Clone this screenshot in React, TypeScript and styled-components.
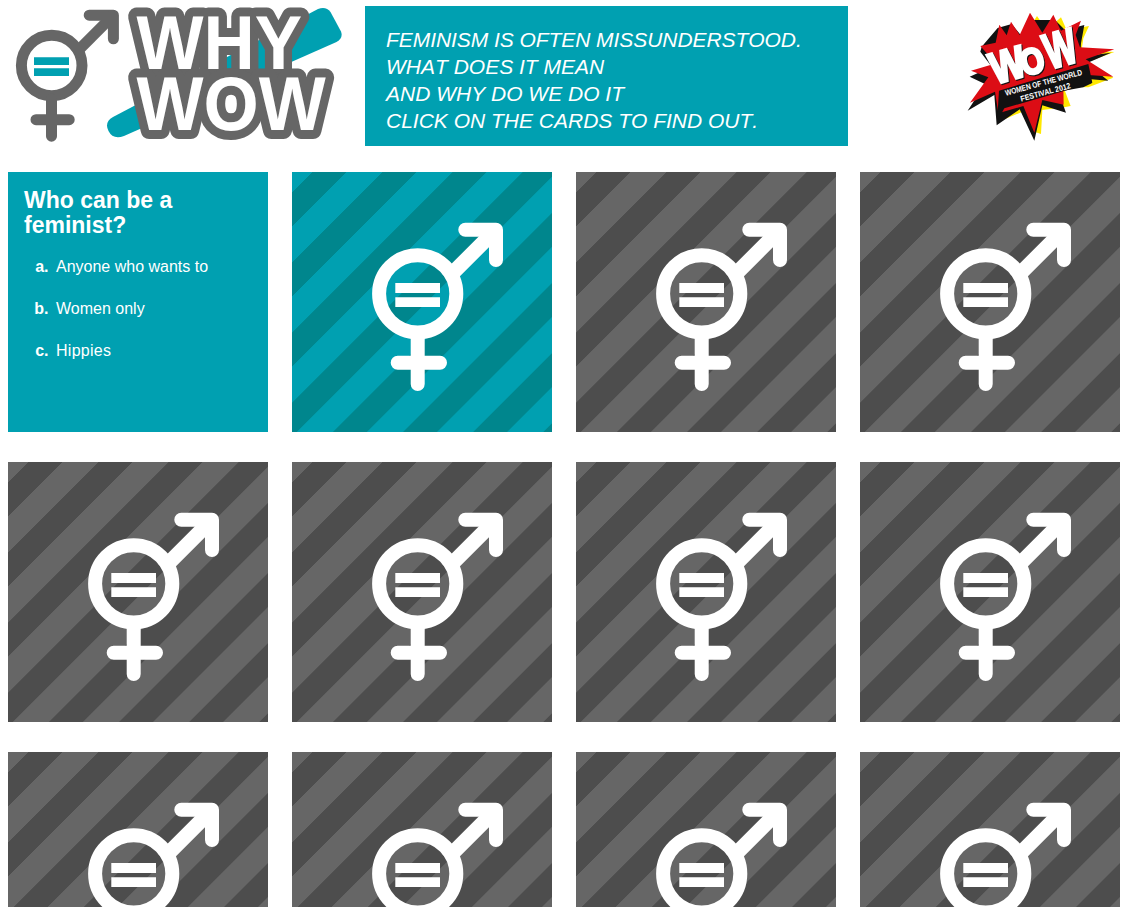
import React from 'react';
import styled, { createGlobalStyle } from 'styled-components';

const TEAL = '#00a0b1';
const TEAL_DARK = '#00868d';
const GREY = '#666666';
const GREY_DARK = '#4d4d4d';

const GlobalStyle = createGlobalStyle`
  * { box-sizing: border-box; }
  body {
    margin: 0;
    background: #fff;
    color: #fff;
    font-family: "Liberation Sans", Arial, sans-serif;
  }
`;

const Page = styled.div`
  height: 100vh;
  overflow: hidden;
  padding-left: 8px;
`;

const Header = styled.header`
  display: flex;
  align-items: flex-start;
  width: 1112px;
  height: 150px;
  margin-bottom: 22px;
`;

const LogoLink = styled.a`
  display: block;
  flex: 0 0 357px;

  svg { display: block; }
`;

const Intro = styled.p`
  flex: 0 0 483px;
  height: 140px;
  margin: 6px 0 0;
  padding: 20px 21px;
  background: ${TEAL};
  font-size: 21px;
  font-style: italic;
  font-kerning: none;
  line-height: 27px;
`;

const IntroLine = styled.span<{ $tracking?: number }>`
  display: block;
  white-space: nowrap;
  letter-spacing: ${(p) => p.$tracking ?? 0}px;
`;

const FestivalLink = styled.a`
  display: block;
  margin-left: auto;

  svg { display: block; }
`;

const Board = styled.main`
  display: grid;
  grid-template-columns: repeat(4, 260px);
  grid-auto-rows: 260px;
  gap: 30px 24px;
`;

const CardBack = styled.button<{ $active?: boolean }>`
  --light: ${(p) => (p.$active ? TEAL : GREY)};
  --dark: ${(p) => (p.$active ? TEAL_DARK : GREY_DARK)};
  display: block;
  padding: 0;
  border: 0;
  cursor: pointer;
  background: repeating-linear-gradient(
    135deg,
    var(--light) 0,
    var(--light) 14.2px,
    var(--dark) 14.8px,
    var(--dark) 38.2px,
    var(--light) 38.8px,
    var(--light) 49.57px
  );

  svg { display: block; }
`;

const Question = styled.section`
  padding: 16px;
  background: ${TEAL};
`;

const QuestionTitle = styled.h2`
  margin: 0 0 20px;
  font-size: 23px;
  font-weight: bold;
  line-height: 25px;
`;

const Answers = styled.ol`
  display: grid;
  gap: 24px;
  margin: 0;
  padding: 0;
  list-style: none;
`;

const Answer = styled.li`
  display: flex;
  gap: 7.5px;
  font-size: 16px;
  line-height: 18px;
`;

const Letter = styled.b`
  width: 24.5px;
  text-align: right;
`;

const AnswerText = styled.span<{ $tracking: number }>`
  letter-spacing: ${(p) => p.$tracking}px;
`;

const EqualitySign = () => (
  <svg width="260" height="260" viewBox="0 0 260 260" fill="none" stroke="#fff" strokeWidth="14" strokeLinecap="round" strokeLinejoin="round">
    <circle cx="125.7" cy="121.8" r="38.6" />
    <path d="M125.7 164V212M105.7 190.7H148M173.3 57.7H204V88" />
    <path d="M155 106.7L204 57.7" strokeWidth="14.8" strokeLinecap="butt" />
    <path d="M103.3 111H148V121H103.3ZM103.3 125.2H148V135H103.3Z" fill="#fff" stroke="none" />
  </svg>
);

const Wordmark = styled.text`
  font: bold 75.5px "Liberation Sans", Arial, sans-serif;
  font-kerning: none;
  fill: #fff;
  stroke: ${GREY};
  stroke-width: 18px;
  stroke-linejoin: round;
  paint-order: stroke;
`;

const SiteLogo = () => (
  <svg width="340" height="150" viewBox="8 0 340 150">
    <path d="M113 117L318 9Q326 6 330.500 12L341 31.500Q343.500 38 336.500 42L124 136Q113 140 108.500 131Q104 122 113 117Z" fill={TEAL} />
    <g fill="none" stroke={GREY} strokeWidth="11" strokeLinecap="round" strokeLinejoin="round">
      <circle cx="51.700" cy="65.500" r="30.300" />
      <path d="M51.500 99V136.200M36 119.700H69.200M89.200 15.200H113.400V38.800" />
      <path d="M75 53.600L113.400 15.200" strokeLinecap="butt" />
    </g>
    <path d="M34 57.200H69V65H34ZM34 68.200H69V76H34Z" fill={TEAL} />
    <Wordmark transform="translate(136.500 68.700) scale(.94 1)">WHY</Wordmark>
    <Wordmark transform="translate(136.500 130.300) scale(.94 1)">WOW</Wordmark>
  </svg>
);

const FestivalTitle = styled.g`
  fill: #fff;
  stroke: #fff;
  stroke-width: 9px;
  font-family: "Liberation Sans", Arial, sans-serif;
  font-weight: bold;
  filter: drop-shadow(3px 3px 0 #111);
`;

const FestivalCaption = styled.g`
  fill: #fff;
  font: bold 24px "Liberation Sans", Arial, sans-serif;
`;

const FestivalLogo = () => (
  <svg width="165" height="150" viewBox="0 0 495 450">
    <path d="M165 75L200 120L246 48L275 90L318 52L335 90L402 78L385 115L380 150L478 156L400 185L475 233L400 262L325 260L347 318L328 322L262 330L258 402L238 395L215 330L150 357L160 310Z" fill="#ffe800" />
    <path d="M80 140L128 84L170 72L205 115L225 60L300 60L330 90L388 75L378 130L376 170L468 158L395 190L460 242L408 238L410 250L385 262L310 275L333 338L262 316L238 422L194 328L125 376L118 285L38 332L90 252L44 230L110 200L76 155Z" fill="#111" />
    <path d="M76 138L122 128L133 74L155 106L168 65L194 105L225 38L262 98L295 44L318 92L378 62L362 105L375 142L478 148L392 178L475 230L400 225L325 260L326 314L262 300L238 398L205 318L130 340L120 275L45 308L100 232L48 212L106 195L100 165Z" fill="#dc0d15" />
    <path d="M132 272L400 192L412 248L148 325L126 365Z" fill="#111" />
    <FestivalTitle>
      <text transform="translate(120 253) rotate(-16) scale(.84 1)" fontSize="132">W</text>
      <text transform="translate(208 229) rotate(-16) scale(.84 1)" fontSize="108">O</text>
      <text transform="translate(284 208) rotate(-16) scale(.68 1)" fontSize="148">W</text>
    </FestivalTitle>
    <FestivalCaption>
      <text transform="translate(153 287) rotate(-15.300)" textLength="238" lengthAdjust="spacingAndGlyphs">WOMEN OF THE WORLD</text>
      <text transform="translate(199 305) rotate(-15.300)" textLength="155" lengthAdjust="spacingAndGlyphs">FESTIVAL 2012</text>
    </FestivalCaption>
  </svg>
);

const INTRO = [
  { text: 'FEMINISM IS OFTEN MISSUNDERSTOOD.', tracking: -0.06 },
  { text: 'WHAT DOES IT MEAN' },
  { text: 'AND WHY DO WE DO IT' },
  { text: 'CLICK ON THE CARDS TO FIND OUT.' },
];

const ANSWERS = [
  { text: 'Anyone who wants to', tracking: 0 },
  { text: 'Women only', tracking: 0 },
  { text: 'Hippies', tracking: 0.28 },
];

export default function App() {
  return (
    <Page>
      <GlobalStyle />
      <Header>
        <LogoLink><SiteLogo /></LogoLink>
        <Intro>
          {INTRO.map((line) => (
            <IntroLine key={line.text} $tracking={line.tracking}>{line.text}</IntroLine>
          ))}
        </Intro>
        <FestivalLink><FestivalLogo /></FestivalLink>
      </Header>
      <Board>
        <Question>
          <QuestionTitle>Who can be a feminist?</QuestionTitle>
          <Answers>
            {ANSWERS.map((answer, i) => (
              <Answer key={answer.text}>
                <Letter>{'abc'[i]}.</Letter>
                <AnswerText $tracking={answer.tracking}>{answer.text}</AnswerText>
              </Answer>
            ))}
          </Answers>
        </Question>
        {Array.from({ length: 11 }, (_, i) => (
          <CardBack key={i} $active={i === 0}><EqualitySign /></CardBack>
        ))}
      </Board>
    </Page>
  );
}
